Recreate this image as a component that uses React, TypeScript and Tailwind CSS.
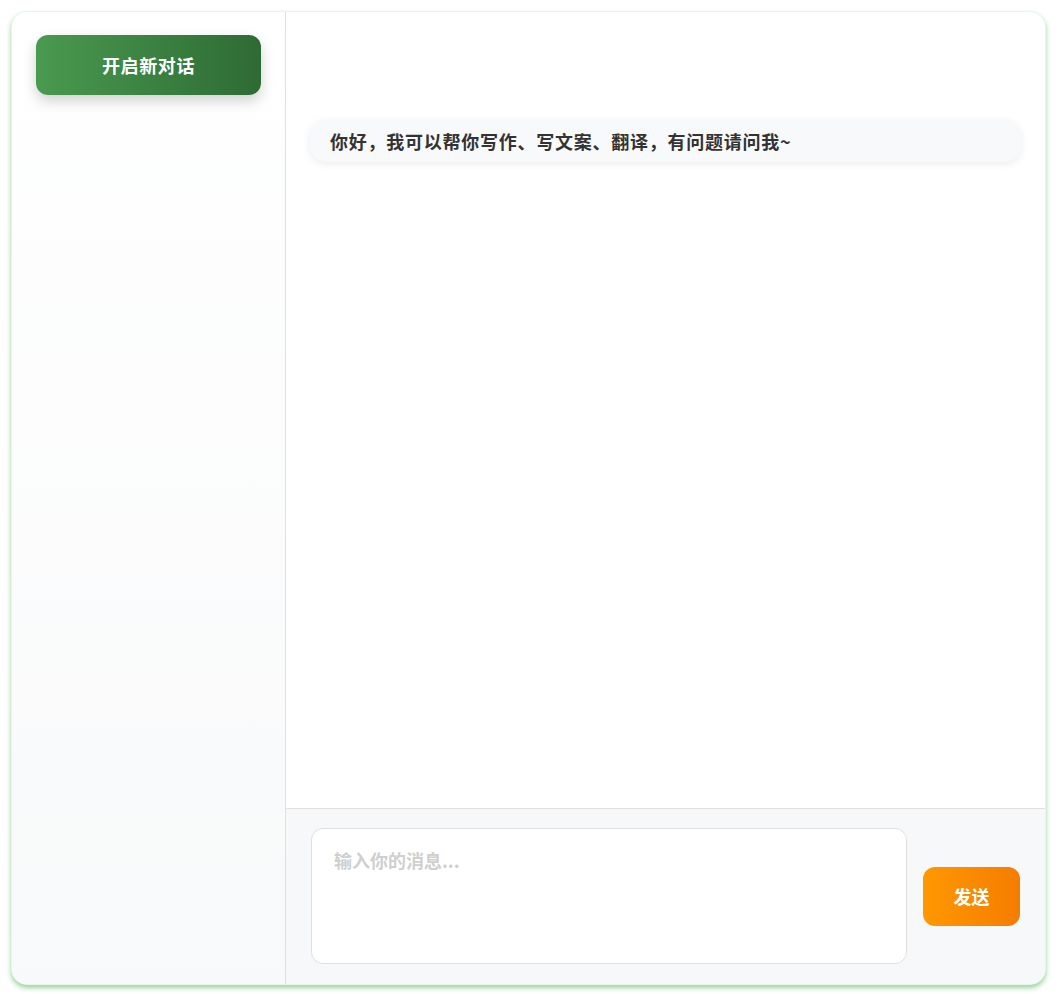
import React, { useState } from "react";

const font = { fontFamily: '"Noto Sans CJK SC", "Noto Sans", sans-serif' };

const Sidebar = ({ onNew }: { onNew: () => void }) => (
    <aside className="w-[274px] shrink-0 border-r border-[#e0e0e0] bg-gradient-to-b from-white to-[#f8f9fa] px-6 pt-[23px]">
        <button
            onClick={onNew}
            className="w-full h-[60px] rounded-xl bg-gradient-to-r from-[#4a9a50] to-[#2e6b34] text-white text-[18px] font-bold tracking-[0.6px] shadow-[0_6px_14px_rgba(0,0,0,0.18)]"
        >
            开启新对话
        </button>
    </aside>
);

export default function App() {
    const [text, setText] = useState("");

    return (
        <div className="h-screen w-full bg-white pl-[11px] pr-[14px] pt-[11px] pb-[9px]" style={font}>
            <div className="flex h-full overflow-hidden rounded-2xl border border-[#e8f5e9] bg-white shadow-[0_3px_5px_rgba(76,175,80,0.55)]">
                <Sidebar onNew={() => setText("")} />
                <main className="flex flex-1 flex-col min-w-0">
                    <div className="flex-1 px-6 pt-[108px]">
                        <div className="rounded-2xl bg-[#f8f9fa] px-5 py-[8px] text-[18px] font-bold leading-[26px] tracking-[0.75px] text-[#333] shadow-[0_2px_8px_rgba(0,0,0,0.08)]">
                            你好，我可以帮你写作、写文案、翻译，有问题请问我~
                        </div>
                    </div>
                    <div className="flex items-center gap-4 border-t border-[#e0e0e0] bg-[#f7f8fa] pl-[25px] pr-[25px] pt-[19px] pb-5">
                        <textarea
                            value={text}
                            onChange={(e) => setText(e.target.value)}
                            placeholder="输入你的消息..."
                            className="h-[136px] flex-1 resize-none rounded-xl border border-[#e0e0e0] bg-white px-[22px] py-[18px] text-[18px] font-semibold leading-[26px] text-[#333] outline-none placeholder:text-[#cfcfcf]"
                        />
                        <button className="h-[59px] w-[97px] rounded-xl bg-gradient-to-r from-[#ff9800] to-[#f57c00] text-[18px] font-bold text-white">
                            发送
                        </button>
                    </div>
                </main>
            </div>
        </div>
    );
}
